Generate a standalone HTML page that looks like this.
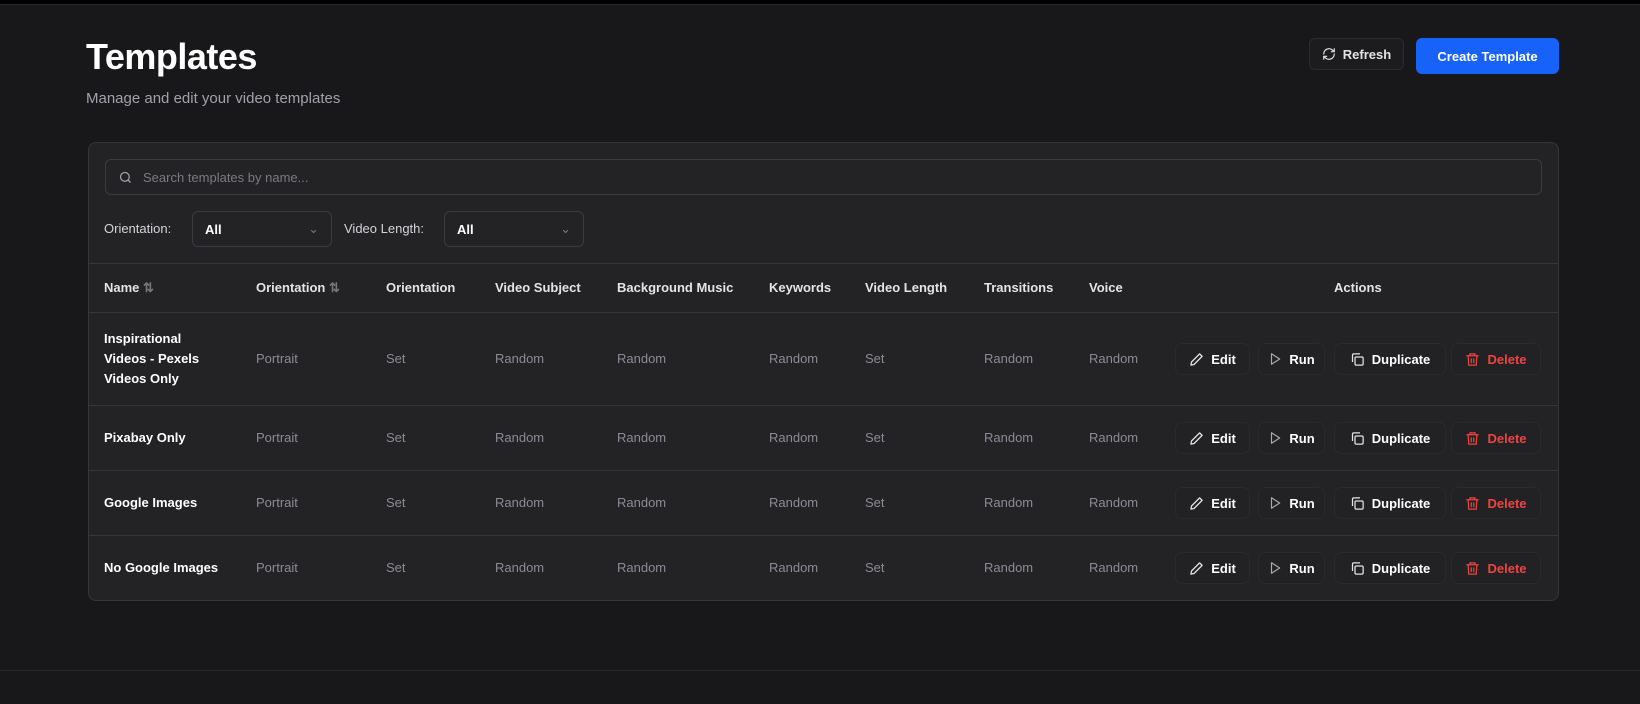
<!DOCTYPE html>
<html><head><meta charset="utf-8"><style>
*{box-sizing:border-box;margin:0;padding:0}
body{width:1640px;height:704px;background:#18181b;font-family:"Liberation Sans",sans-serif;position:relative;overflow:hidden;color:#f4f4f5}
.a{position:absolute}
.top{left:0;top:0;width:1640px;height:5px;background:#000;border-bottom:1px solid #2a2a2e}
h1{position:absolute;left:86px;top:36px;font-size:36px;font-weight:700;letter-spacing:-0.5px;color:#fff}
.sub{left:86px;top:90px;font-size:15px;color:#a1a1aa}
.btn{display:flex;align-items:center;justify-content:center;gap:7px;font-size:13px;font-weight:700;border-radius:6px}
.card{left:88px;top:142px;width:1471px;height:459px;background:#232326;border:1px solid #35353a;border-radius:8px}
.search{left:105px;top:159px;width:1437px;height:36px;border:1px solid #3a3a40;border-radius:6px;display:flex;align-items:center;padding-left:12px;gap:10px;color:#7a7a82;font-size:13px}
.sel{height:36px;border:1px solid #3a3a40;border-radius:6px;display:flex;align-items:center;justify-content:space-between;padding:0 12px;font-size:13px;font-weight:700;color:#fff}
.lbl{font-size:13px;color:#d4d4d8}
.hl{left:88px;width:1471px;height:1px;background:#35353a}
.th{font-size:13px;font-weight:700;color:#e4e4e7;top:280px}
.td{font-size:13px;color:#8b8b94}
.nm{font-size:13px;font-weight:700;color:#fff;line-height:20px}
.ab{height:32px;border:1px solid #2a2a2e;background:#222225;border-radius:7px}
</style></head><body>
<div class="a top"></div>
<h1>Templates</h1>
<div class="a sub">Manage and edit your video templates</div>
<div class="a btn" style="left:1309px;top:38px;width:95px;height:32px;border:1px solid #2c2c30;background:#1c1c1f;color:#e4e4e7">
<svg width="14" height="14" viewBox="0 0 24 24" fill="none" stroke="#e4e4e7" stroke-width="2" stroke-linecap="round" stroke-linejoin="round"><path d="M3 12a9 9 0 0 1 15-6.7L21 8"/><path d="M21 3v5h-5"/><path d="M21 12a9 9 0 0 1-15 6.7L3 16"/><path d="M8 16H3v5"/></svg>Refresh</div>
<div class="a btn" style="left:1416px;top:38px;width:143px;height:36px;background:#1762f9;color:#fff">Create Template</div>
<div class="a card"></div>
<div class="a search"><svg width="15" height="15" viewBox="0 0 24 24" fill="none" stroke="#a1a1aa" stroke-width="2"><circle cx="11" cy="11" r="7"/><path d="M20 20l-4-4"/></svg>Search templates by name...</div>
<div class="a lbl" style="left:104px;top:221px">Orientation:</div>
<div class="a sel" style="left:192px;top:211px;width:140px">All<span style="color:#777;font-weight:400">⌄</span></div>
<div class="a lbl" style="left:344px;top:221px">Video Length:</div>
<div class="a sel" style="left:444px;top:211px;width:140px">All<span style="color:#777;font-weight:400">⌄</span></div>
<div class="a hl" style="top:263px"></div>
<div class="a th" style="left:104px">Name <span style="color:#777">⇅</span></div>
<div class="a th" style="left:256px">Orientation <span style="color:#777">⇅</span></div>
<div class="a th" style="left:386px">Orientation</div>
<div class="a th" style="left:495px">Video Subject</div>
<div class="a th" style="left:617px">Background Music</div>
<div class="a th" style="left:769px">Keywords</div>
<div class="a th" style="left:865px">Video Length</div>
<div class="a th" style="left:984px">Transitions</div>
<div class="a th" style="left:1089px">Voice</div>
<div class="a th" style="left:1334px">Actions</div>
<div class="a hl" style="top:312px"></div>
<div class="a hl" style="top:405px"></div>
<div class="a hl" style="top:470px"></div>
<div class="a hl" style="top:535px"></div>
<div id="rows"></div>
<div class="a" style="left:0;top:670px;width:1640px;height:1px;background:#27272b"></div>
<script>
const rows=[[359,"Inspirational<br>Videos - Pexels<br>Videos Only"],[438,"Pixabay Only"],[503,"Google Images"],[568,"No Google Images"]];
const cols=[[256,"Portrait"],[386,"Set"],[495,"Random"],[617,"Random"],[769,"Random"],[865,"Set"],[984,"Random"],[1089,"Random"]];
const pen='<svg width="15" height="15" viewBox="0 0 24 24" fill="none" stroke="#e4e4e7" stroke-width="2" stroke-linejoin="round"><path d="M17 3l4 4L8 20l-5 1 1-5z"/></svg>';
const play='<svg width="14" height="14" viewBox="0 0 24 24" fill="none" stroke="#aaa" stroke-width="2" stroke-linejoin="round"><path d="M6 3l14 9-14 9z"/></svg>';
const dup='<svg width="15" height="15" viewBox="0 0 24 24" fill="none" stroke="#e4e4e7" stroke-width="2"><rect x="8" y="8" width="13" height="13" rx="2"/><path d="M4 16V5a2 2 0 0 1 2-2h10"/></svg>';
const del='<svg width="15" height="15" viewBox="0 0 24 24" fill="none" stroke="#ef4444" stroke-width="2" stroke-linecap="round"><path d="M3 6h18M8 6V3h8v3M5 6l1 15h12l1-15M10 11v6M14 11v6"/></svg>';
let h="";
for(const [y,n] of rows){
 h+=`<div class="a nm" style="left:104px;top:${y-(n.includes('<br>')?30:10)}px">${n}</div>`;
 for(const [x,t] of cols) h+=`<div class="a td" style="left:${x}px;top:${y-8}px">${t}</div>`;
 const bs=[[1175,75,pen,"Edit","#fff"],[1258,67,play,"Run","#fff"],[1334,112,dup,"Duplicate","#fff"],[1451,90,del,"Delete","#ef4444"]];
 for(const [x,w,ic,t,c] of bs) h+=`<div class="a btn ab" style="left:${x}px;top:${y-16}px;width:${w}px;color:${c}">${ic}${t}</div>`;
}
document.getElementById("rows").innerHTML=h;
</script>
</body></html>
